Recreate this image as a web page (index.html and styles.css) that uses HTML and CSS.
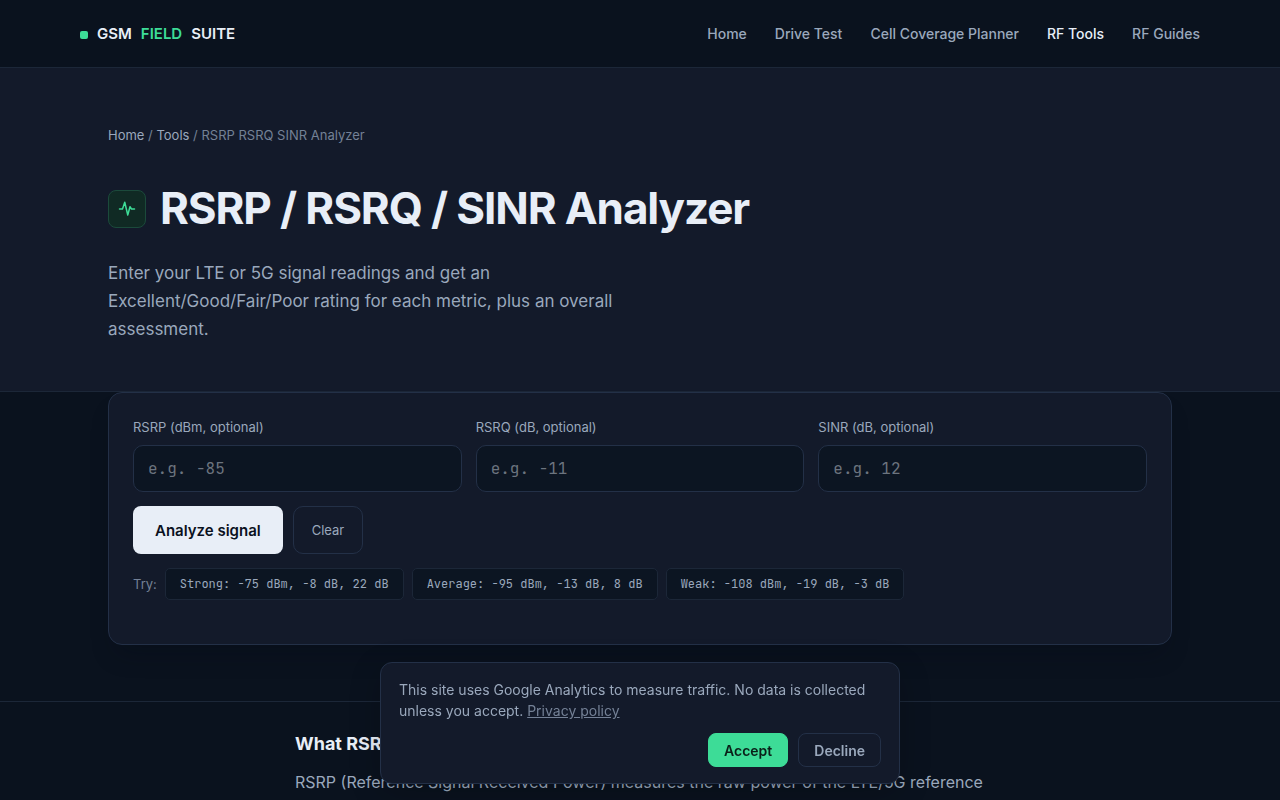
FILE: index.html
```html
<!DOCTYPE html>
<html lang="en">
  <head>
    <meta charset="UTF-8" />
    <meta name="viewport" content="width=device-width, initial-scale=1.0" />
    <title>RSRP / RSRQ / SINR Analyzer</title>
    <link rel="stylesheet" href="styles.css">
  </head>
  <body>
    <header class="site-header">
      <a class="logo" href="#">
        <span class="logo-dot"></span>
        <span>GSM</span>
        <span class="logo-accent">FIELD</span>
        <span>SUITE</span>
      </a>
      <nav class="site-nav">
        <a href="#">Home</a>
        <a href="#">Drive Test</a>
        <a href="#">Cell Coverage Planner</a>
        <a href="#" class="active">RF Tools</a>
        <a href="#">RF Guides</a>
      </nav>
    </header>

    <main>
      <section class="hero">
        <div class="container">
          <nav class="breadcrumb">
            <a href="#">Home</a> / <a href="#">Tools</a> / RSRP RSRQ SINR Analyzer
          </nav>
          <div class="hero-title">
            <span class="hero-icon">
              <svg width="18" height="18" viewBox="0 0 24 24" fill="none" stroke="currentColor" stroke-width="2" stroke-linecap="round" stroke-linejoin="round">
                <path d="M2 12h4l3-9 4 17 3-11 2 3h4" />
              </svg>
            </span>
            <h1>RSRP / RSRQ / SINR Analyzer</h1>
          </div>
          <p class="hero-text">
            Enter your LTE or 5G signal readings and get an
            Excellent/Good/Fair/Poor rating for each metric, plus an overall
            assessment.
          </p>
        </div>
      </section>

      <div class="container">
        <form class="panel">
          <div class="fields">
            <div class="field">
              <label for="rsrp">RSRP (dBm, optional)</label>
              <input type="text" id="rsrp" placeholder="e.g. -85" />
            </div>
            <div class="field">
              <label for="rsrq">RSRQ (dB, optional)</label>
              <input type="text" id="rsrq" placeholder="e.g. -11" />
            </div>
            <div class="field">
              <label for="sinr">SINR (dB, optional)</label>
              <input type="text" id="sinr" placeholder="e.g. 12" />
            </div>
          </div>
          <div class="actions">
            <button type="button" class="btn-primary">Analyze signal</button>
            <button type="button" class="btn-ghost">Clear</button>
          </div>
          <div class="examples">
            <span>Try:</span>
            <button type="button" class="chip">Strong: -75 dBm, -8 dB, 22 dB</button>
            <button type="button" class="chip">Average: -95 dBm, -13 dB, 8 dB</button>
            <button type="button" class="chip">Weak: -108 dBm, -19 dB, -3 dB</button>
          </div>
        </form>
      </div>

      <section class="article">
        <div class="article-inner">
          <h2>What RSRP, RSRQ and SINR mean</h2>
          <p>RSRP (Reference Signal Received Power) measures the raw power of the LTE/5G reference</p>
        </div>
      </section>
    </main>

    <div class="cookie-banner">
      <p>
        This site uses Google Analytics to measure traffic. No data is collected
        unless you accept. <a href="#">Privacy policy</a>
      </p>
      <div class="cookie-actions">
        <button type="button" class="btn-accept">Accept</button>
        <button type="button" class="btn-decline">Decline</button>
      </div>
    </div>
  </body>
</html>
```

FILE: styles.css
```css
:root {
  --bg: #0a121e;
  --surface: #131a2a;
  --field: #0c1522;
  --line: #1c2738;
  --line-strong: #233047;
  --text: #e8eef7;
  --muted: #9aa8bc;
  --dim: #748196;
  --green: #3ddc97;
  --mono: "JetBrains Mono", "DejaVu Sans Mono", monospace;
}

* {
  box-sizing: border-box;
}

body {
  margin: 0;
  background: var(--bg);
  color: var(--text);
  font-family: "Inter", sans-serif;
  font-size: 16px;
  line-height: 28px;
}

a {
  color: inherit;
  text-decoration: none;
}

h1,
h2,
p {
  margin: 0;
}

button,
input {
  font-family: inherit;
}

button {
  cursor: pointer;
}

/* Header */
.site-header {
  display: flex;
  align-items: center;
  justify-content: space-between;
  height: 68px;
  padding: 0 80px;
  border-bottom: 1px solid var(--line);
}

.logo {
  display: flex;
  align-items: baseline;
  gap: 9px;
  font-size: 15px;
  font-weight: 600;
  line-height: 25px;
}

.logo-dot {
  width: 8px;
  height: 8px;
  border-radius: 2px;
  background: var(--green);
}

.logo-accent {
  color: var(--green);
}

.site-nav {
  display: flex;
  gap: 28px;
  color: var(--muted);
  font-size: 14px;
  font-weight: 500;
}

.site-nav .active {
  color: var(--text);
}

/* Hero */
.container {
  max-width: 1128px;
  margin: 0 auto;
  padding: 0 32px;
}

.hero {
  padding: 56px 0 48px;
  background: var(--surface);
  border-bottom: 1px solid var(--line);
}

.breadcrumb {
  color: var(--dim);
  font-size: 13px;
  line-height: 22px;
}

.breadcrumb a {
  color: var(--muted);
}

.hero-title {
  display: flex;
  align-items: center;
  gap: 14px;
  margin: 38px 0 25px;
}

.hero-icon {
  display: flex;
  align-items: center;
  justify-content: center;
  width: 38px;
  height: 38px;
  border: 1px solid #1b4a3b;
  border-radius: 8px;
  background: #102a24;
  color: var(--green);
}

h1 {
  font-size: 44px;
  font-weight: 700;
  line-height: 48px;
  letter-spacing: -0.025em;
  padding-bottom: 2px;
}

.hero-text {
  max-width: 540px;
  color: var(--muted);
  font-size: 17px;
}

/* Analyzer form */
.panel {
  padding: 24px;
  border: 1px solid var(--line-strong);
  border-radius: 14px;
  background: var(--surface);
  box-shadow: 0 16px 24px -8px rgba(0, 8, 20, 0.25);
}

.fields {
  display: grid;
  grid-template-columns: repeat(3, 1fr);
  gap: 14px;
}

.field {
  display: flex;
  flex-direction: column;
  gap: 7px;
}

.field label {
  color: var(--muted);
  font-size: 13px;
  line-height: 21px;
}

.field input {
  width: 100%;
  height: 47px;
  padding: 0 14px;
  border: 1px solid var(--line-strong);
  border-radius: 10px;
  background: var(--field);
  color: var(--text);
  font-family: var(--mono);
  font-size: 16px;
}

.field input::placeholder {
  color: #6c747f;
}

.actions {
  display: flex;
  gap: 10px;
  margin: 14px 0;
}

.btn-primary {
  height: 48px;
  padding: 0 22px;
  border: none;
  border-radius: 8px;
  background: var(--text);
  color: #0a111e;
  font-size: 15px;
  font-weight: 600;
}

.btn-ghost {
  padding: 0 18px;
  border: 1px solid var(--line-strong);
  border-radius: 10px;
  background: transparent;
  color: var(--muted);
  font-size: 13px;
}

.examples {
  display: flex;
  flex-wrap: wrap;
  align-items: center;
  gap: 8px;
  margin-bottom: 20px;
  color: var(--dim);
  font-size: 13px;
}

.chip {
  height: 32px;
  padding: 0 14px;
  border: 1px solid var(--line);
  border-radius: 5px;
  background: var(--field);
  color: var(--muted);
  font-family: var(--mono);
  font-size: 12px;
}

/* Article */
.article {
  margin-top: 56px;
  padding: 28px 32px;
  border-top: 1px solid var(--line);
}

.article-inner {
  max-width: 690px;
  margin: 0 auto;
}

.article h2 {
  margin-bottom: 10px;
  font-size: 18px;
  font-weight: 700;
}

.article p {
  color: var(--muted);
}

/* Cookie notice */
.cookie-banner {
  position: fixed;
  right: 16px;
  bottom: 16px;
  left: 16px;
  max-width: 520px;
  margin: 0 auto;
  padding: 16px 18px;
  border: 1px solid var(--line-strong);
  border-radius: 12px;
  background: var(--surface);
  box-shadow: 0 8px 32px rgba(0, 0, 0, 0.2);
}

.cookie-banner p {
  color: var(--muted);
  font-size: 14px;
  line-height: 21px;
}

.cookie-banner a {
  color: var(--dim);
  text-decoration: underline;
}

.cookie-actions {
  display: flex;
  justify-content: flex-end;
  gap: 10px;
  margin-top: 12px;
}

.cookie-actions button {
  height: 34px;
  padding: 0 15px;
  border: 1px solid var(--line-strong);
  border-radius: 8px;
  font-size: 14px;
  font-weight: 600;
}

.cookie-actions .btn-accept {
  border-color: var(--green);
  background: var(--green);
  color: #0a1f18;
}

.cookie-actions .btn-decline {
  background: transparent;
  color: var(--muted);
}
```
